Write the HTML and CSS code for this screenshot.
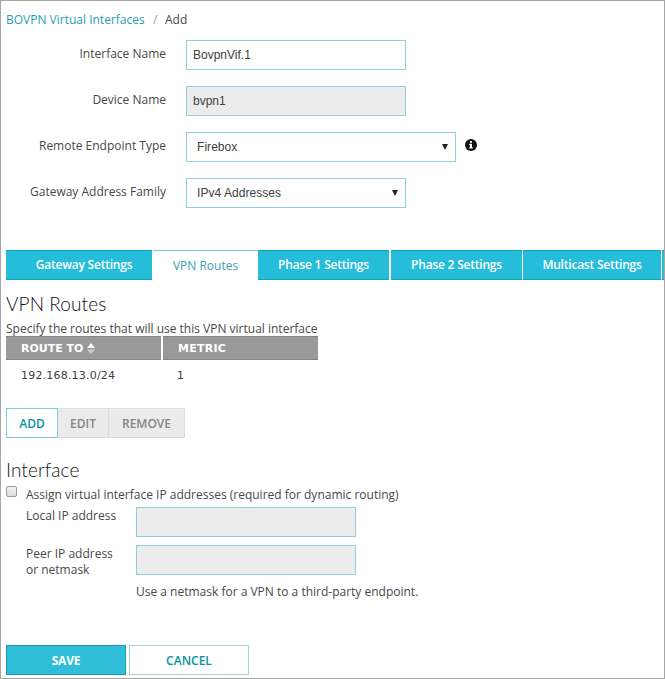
FILE: index.html
```html
<!DOCTYPE html>
<html lang="en">
<head>
<meta charset="utf-8">
<title>BOVPN Virtual Interfaces</title>
<link rel="stylesheet" href="styles.css">
</head>
<body>
<main class="page">
  <nav class="crumbs"><a class="crumb-link">BOVPN Virtual Interfaces</a><span class="slash">/</span><span class="crumb-current">Add</span></nav>

  <section class="form">
    <div class="row"><label class="label">Interface Name</label><div class="field">BovpnVif.1</div></div>
    <div class="row"><label class="label">Device Name</label><div class="field disabled">bvpn1</div></div>
    <div class="row"><label class="label">Remote Endpoint Type</label><div class="field select wide"><span>Firebox</span><i class="caret"></i></div>
      <svg class="info" viewBox="0 0 12 12"><circle cx="6" cy="6" r="6" fill="#111"/><path d="M5 2h2v1.700H5zM4.200 4.700H7v3.600h.8v1.200H4.200V8.300H5V5.900h-.8z" fill="#fff"/></svg></div>
    <div class="row"><label class="label">Gateway Address Family</label><div class="field select"><span>IPv4 Addresses</span><i class="caret"></i></div></div>
  </section>

  <div class="tabs">
    <div class="tab t-gateway">Gateway Settings</div>
    <div class="tab t-routes active">VPN Routes</div>
    <div class="tab t-phase t-phase1">Phase 1 Settings</div>
    <div class="tab t-phase">Phase 2 Settings</div>
    <div class="tab t-multicast">Multicast Settings</div>
    <div class="tab t-next"></div>
  </div>

  <h2 class="title routes-title">VPN Routes</h2>
  <p class="intro">Specify the routes that will use this VPN virtual interface</p>
  <div class="table">
    <div class="th">ROUTE TO<svg class="sort" viewBox="0 0 8 11"><path d="M4 0l4 5H0z" fill="#fff"/><path d="M4 11L0 6.500h8z" fill="#d0d0d0"/></svg></div>
    <div class="th metric">METRIC</div>
    <div class="td">192.168.13.0/24</div>
    <div class="td metric">1</div>
  </div>
  <div class="actions">
    <div class="btn add">ADD</div><div class="btn edit">EDIT</div><div class="btn remove">REMOVE</div>
  </div>

  <h2 class="title iface-title">Interface</h2>
  <div class="assign"><span class="check"></span><span class="assign-text">Assign virtual interface IP addresses (required for dynamic routing)</span></div>
  <div class="ip-row"><label class="ip-label">Local IP address</label><div class="ip-field"></div></div>
  <div class="ip-row"><label class="ip-label">Peer IP address<br>or netmask</label><div class="ip-field"></div></div>
  <p class="hint">Use a netmask for a VPN to a third-party endpoint.</p>

  <div class="footer"><div class="big save">SAVE</div><div class="big cancel">CANCEL</div></div>
</main>
</body>
</html>
```
FILE: styles.css
```css
* { box-sizing: border-box; }
body { margin: 0; background: #fff; }
.page {
  width: 665px;
  height: 679px;
  overflow: hidden;
  border: 1px solid #a6a6a6;
  padding: 10px 0 0 5px;
  font: 12px/18px "Open Sans", sans-serif;
  color: #484848;
  white-space: nowrap;
}
.crumbs { display: flex; height: 18px; }
.crumb-link { width: 147px; color: #2a9db5; }
.slash { width: 12px; color: #999; }
.form { padding-top: 11px; }
.row { display: flex; height: 46px; }
.label { width: 160px; margin-right: 20px; text-align: right; padding-top: 5px; }
.field {
  width: 220px;
  height: 30px;
  border: 1px solid #90d0d6;
  padding-left: 6px;
  font: 12px/28px "Liberation Sans", sans-serif;
  color: #404040;
}
.field.disabled { background: #ececec; }
.field.select { display: flex; justify-content: space-between; align-items: center; padding: 0 7px 0 10px; letter-spacing: 0.05px; }
.field.wide { width: 270px; }
.caret { border: solid transparent; border-width: 6px 3px 0; border-top-color: #222; }
.info { width: 12px; height: 12px; margin: 7px 0 0 9px; }
.tabs { display: flex; gap: 1px; margin-top: 26px; height: 30px; }
.tab {
  flex: none;
  height: 30px;
  border-top: 1px solid #129fb8;
  border-bottom: 1px solid #129fb8;
  background: #25bdd9;
  color: #fff;
  font-weight: 600;
  letter-spacing: -0.22px;
  line-height: 28px;
  text-align: center;
}
.t-gateway { width: 146px; padding-left: 10px; }
.t-routes { width: 105px; }
.t-phase { width: 131px; }
.t-phase1 { margin: 0 1px 0 -1px; }
.t-multicast { width: 138px; }
.t-next { width: 4px; }
.tab.active { background: #fff; color: #3a9fb4; font-weight: 400; letter-spacing: 0; line-height: 29px; border-color: #7accd5 transparent transparent; }
.title { margin: 0; font: 300 19px/24px Lato, sans-serif; letter-spacing: 0.1px; color: #111; }
.routes-title { padding-top: 12px; height: 40px; }
.intro { margin: 0; height: 16px; line-height: 17px; }
.table { display: grid; grid-template-columns: 155px 155px; column-gap: 2px; width: 312px; font-family: "DejaVu Sans", sans-serif; font-size: 11px; }
.th { display: flex; align-items: center; height: 24px; padding: 1px 0 0 15px; border: 1px solid #858585; border-width: 1px 0; background: #999; color: #fff; font-weight: 700; }
.th.metric { letter-spacing: 0.25px; padding-left: 15px; }
.sort { width: 8px; height: 11px; margin-left: 4px; }
.td { height: 30px; padding-left: 15px; line-height: 31px; color: #404040; letter-spacing: 0.2px; }
.td.metric { padding-left: 14px; }
.actions { display: flex; margin-top: 18px; }
.btn { height: 30px; border: 1px solid #d8dede; background: #ebebeb; color: #858585; font-weight: 600; line-height: 29px; text-align: center; border-left: 0; }
.add { width: 52px; border: 1px solid #82cbd1; background: #fff; color: #0594a8; }
.edit { width: 51px; }
.remove { width: 76px; }
.iface-title { margin-top: 20px; height: 28px; }
.assign { display: flex; height: 21px; }
.check { width: 11px; height: 11px; margin: 0 9px 0 0; border: 1px solid #999; border-radius: 2px; background: linear-gradient(#f2f2f2, #dcdcdc); }
.assign-text { line-height: 20px; margin-top: -1px; }
.ip-row { display: flex; height: 38px; padding-left: 20px; }
.ip-label { width: 110px; padding-top: 1px; line-height: 16px; }
.ip-field { width: 220px; height: 30px; border: 1px solid #8bd1d6; background: #ececec; }
.hint { margin: 0 0 0 130px; height: 62px; line-height: 18px; }
.footer { display: flex; gap: 2px; }
.big { width: 120px; height: 30px; border: 1px solid #139eb4; background: #2fbdd8; color: #fff; font-weight: 700; line-height: 29px; text-align: center; }
.save { letter-spacing: -0.2px; }
.cancel { margin-left: 1px; background: #fff; border-color: #a3d5d8; color: #0892a4; font-weight: 600; }
```
